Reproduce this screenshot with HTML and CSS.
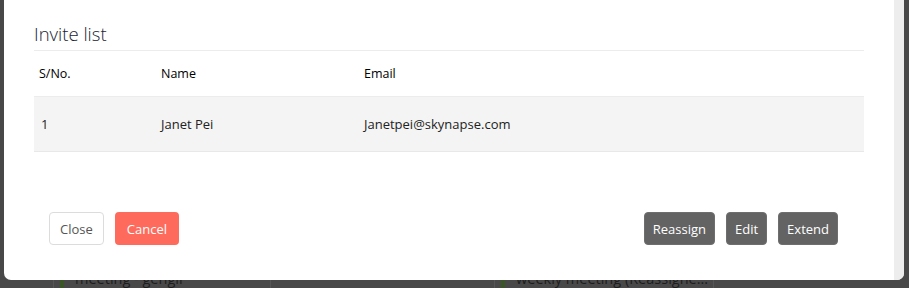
FILE: index.html
```html
<!DOCTYPE html>
<html lang="en">

<head>
    <meta charset="UTF-8">
    <meta name="viewport" content="width=device-width, initial-scale=1.0">
    <title>Invite list</title>
    <link rel="stylesheet" href="styles.css">
</head>

<body>
    <!-- 모달 -->
    <div class="modal">
        <div class="modal-body">
            <h2 class="modal-title">Invite list</h2>

            <table class="invite-table">
                <thead>
                    <tr>
                        <th class="col-no">S/No.</th>
                        <th class="col-name">Name</th>
                        <th>Email</th>
                    </tr>
                </thead>
                <tbody>
                    <tr>
                        <td class="col-no">1</td>
                        <td class="col-name">Janet Pei</td>
                        <td>Janetpei@skynapse.com</td>
                    </tr>
                </tbody>
            </table>

            <!-- 버튼 영역 -->
            <div class="modal-footer">
                <div class="btn-group">
                    <button class="btn btn-light">Close</button>
                    <button class="btn btn-danger">Cancel</button>
                </div>
                <div class="btn-group">
                    <button class="btn btn-dark">Reassign</button>
                    <button class="btn btn-dark">Edit</button>
                    <button class="btn btn-dark">Extend</button>
                </div>
            </div>
        </div>
        <div class="scroll-track"></div>
    </div>

    <!-- 모달 뒤 캘린더 -->
    <div class="behind">
        <div class="event-card">
            <span class="event-bar"></span>
            <span class="event-text">meeting - gengli</span>
        </div>
        <div class="event-card second">
            <span class="event-bar"></span>
            <span class="event-text">weekly meeting (Reassigne...</span>
        </div>
    </div>
</body>

</html>
```

FILE: styles.css
```css
/* 기본 스타일 */
body {
    font-family: "Open Sans", "Noto Sans", sans-serif;
    margin: 0;
    padding: 0 5px 0 4px;
    background-color: #484848;
    height: 288px;
    overflow: hidden;
}

/* 모달 */
.modal {
    display: flex;
    height: 280px;
    background-color: white;
    border-radius: 0 0 7px 7px;
    overflow: hidden;
    position: relative;
    z-index: 1;
}

.modal-body {
    flex: 1;
    padding: 17px 30px 0 30px;
}

.scroll-track {
    width: 10px;
    background-color: #ededed;
}

.modal-title {
    margin: 0;
    font-size: 18.5px;
    font-weight: 300;
    color: #1a2433;
    line-height: 33px;
    border-bottom: 1px solid #ececec;
}

/* 초대 목록 테이블 */
.invite-table {
    width: 100%;
    border-collapse: collapse;
    font-size: 13px;
    color: #222;
}

.invite-table th {
    text-align: left;
    font-size: 12.5px;
    font-weight: 500;
    color: #000;
    height: 45px;
    padding: 0 5px;
    border-bottom: 1px solid #ececec;
}

.invite-table td {
    height: 54px;
    padding: 0 5px;
    background-color: #f4f4f4;
    border-bottom: 1px solid #e8e8e8;
}

.invite-table td.col-no {
    padding-left: 7px;
}

.col-no {
    width: 110px;
}

.col-name {
    width: 193px;
}

/* 버튼 영역 */
.modal-footer {
    display: flex;
    justify-content: space-between;
    margin-top: 60px;
    padding: 0 26px 0 15px;
}

.btn-group {
    display: flex;
    gap: 11px;
}

.btn {
    font-family: inherit;
    font-size: 13px;
    height: 33px;
    padding: 0 10px;
    border-radius: 4px;
    border: 1px solid transparent;
    cursor: pointer;
}

.btn-light {
    background-color: white;
    border-color: #dcdcdc;
    color: #555;
}

.btn-danger {
    background-color: #fe6b5c;
    color: white;
    padding: 0 11px;
}

.btn-dark {
    background-color: #636363;
    border-color: #6e6e6e;
    color: white;
    padding: 0 8px;
}

/* 모달 뒤 캘린더 */
.behind {
    display: flex;
    height: 8px;
    overflow: hidden;
}

.event-card {
    box-sizing: border-box;
    display: flex;
    gap: 11px;
    width: 218px;
    margin-left: 49px;
    height: 30px;
    margin-top: -16px;
    padding-left: 6px;
    border-left: 1px solid #555;
    border-right: 1px solid #555;
    overflow: hidden;
}

.event-card.second {
    margin-left: 223px;
    width: 220px;
}

.event-bar {
    flex-shrink: 0;
    width: 4px;
    height: 30px;
    background-color: #3a5526;
}

.event-text {
    font-size: 14.5px;
    line-height: 30px;
    color: #1d1d1d;
    white-space: nowrap;
}
```
